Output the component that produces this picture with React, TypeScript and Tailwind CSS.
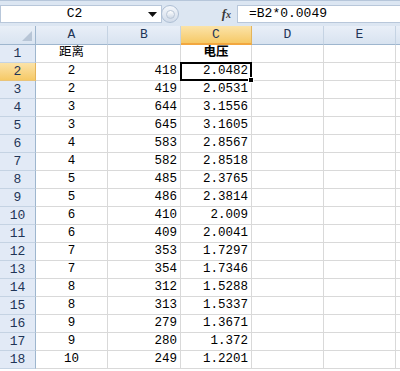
import React from "react";

type Row = { a: string; b: string; c: string; bold?: boolean };

const rows: Row[] = [
  { a: "距离", b: "", c: "电压", bold: true },
  { a: "2", b: "418", c: "2.0482" },
  { a: "2", b: "419", c: "2.0531" },
  { a: "3", b: "644", c: "3.1556" },
  { a: "3", b: "645", c: "3.1605" },
  { a: "4", b: "583", c: "2.8567" },
  { a: "4", b: "582", c: "2.8518" },
  { a: "5", b: "485", c: "2.3765" },
  { a: "5", b: "486", c: "2.3814" },
  { a: "6", b: "410", c: "2.009" },
  { a: "6", b: "409", c: "2.0041" },
  { a: "7", b: "353", c: "1.7297" },
  { a: "7", b: "354", c: "1.7346" },
  { a: "8", b: "312", c: "1.5288" },
  { a: "8", b: "313", c: "1.5337" },
  { a: "9", b: "279", c: "1.3671" },
  { a: "9", b: "280", c: "1.372" },
  { a: "10", b: "249", c: "1.2201" },
];

const font = { fontFamily: '"Liberation Mono", "Noto Sans CJK SC", monospace' };

function FormulaBar() {
  return (
    <div className="flex h-[26px] items-start border-t border-[#b6c6da] bg-[#dce6f2] pt-[4px]">
      <div className="flex h-[18px] w-[162px] items-center border border-[#b8c7da] bg-white">
        <span className="flex-1 text-center text-[13px] text-black" style={font}>
          C2
        </span>
        <svg width="9" height="5" viewBox="0 0 9 5" className="mr-[4px]">
          <path d="M0 0h9L4.5 5z" fill="#111" />
        </svg>
      </div>
      <div className="-ml-[1px] flex h-[18px] w-[18px] items-center justify-center rounded-full border border-[#aebfd4] bg-gradient-to-b from-[#f4f7fb] to-[#d2dcea]">
        <div className="h-[9px] w-[9px] rounded-full border border-[#b9c6d6] bg-gradient-to-b from-[#ffffff] to-[#cfd9e6]" />
      </div>
      <div className="flex h-[18px] w-[58px] items-center justify-end pr-[6px]">
        <span
          className="text-[13px] font-bold italic text-[#3a3a3a]"
          style={{ fontFamily: '"Liberation Serif", serif' }}
        >
          f<span className="text-[10px]">x</span>
        </span>
      </div>
      <div className="flex h-[18px] flex-1 items-center border border-r-0 border-[#b8c7da] bg-white pl-[11px]">
        <span className="text-[13px] text-black" style={font}>
          =B2*0.0049
        </span>
      </div>
    </div>
  );
}

function HeaderRow() {
  const cols = [
    { l: "A", w: "w-[72px]" },
    { l: "B", w: "w-[73px]" },
    { l: "C", w: "w-[71px]", sel: true },
    { l: "D", w: "w-[72px]" },
    { l: "E", w: "w-[72px]" },
  ];
  return (
    <div className="flex h-[19px]">
      <div className="relative w-[36px] border-r border-b border-[#9eb6ce] bg-gradient-to-b from-[#e9eff7] to-[#d9e4f1]">
        <svg width="10" height="10" viewBox="0 0 10 10" className="absolute right-[3px] bottom-[3px]">
          <path d="M10 0V10H0z" fill="#b7c5d6" />
        </svg>
      </div>
      {cols.map((c) =>
        c.sel ? (
          <div
            key={c.l}
            className={`${c.w} flex items-center justify-center border-r border-b-2 border-r-[#e4b45a] border-b-[#f2a73f] bg-gradient-to-b from-[#fbe3a8] to-[#f6c965] text-[13px] text-[#1f3557]`}
            style={font}
          >
            {c.l}
          </div>
        ) : (
          <div
            key={c.l}
            className={`${c.w} flex items-center justify-center border-r border-b border-r-[#c5d3e3] border-b-[#9eb6ce] bg-gradient-to-b from-[#e9eff8] to-[#d8e3f0] text-[13px] text-[#1f3557]`}
            style={font}
          >
            {c.l}
          </div>
        ),
      )}
      <div className="flex-1 border-b border-[#9eb6ce] bg-gradient-to-b from-[#e9eff8] to-[#d8e3f0]" />
    </div>
  );
}

function DataRow({ r, i }: { r: Row; i: number }) {
  const n = i + 1;
  const sel = n === 2;
  const cell = "h-[18px] border-r border-b border-[#d9d9d9] flex items-end pb-[2px] text-[12.5px] text-black leading-[14px]";
  return (
    <div className="flex h-[18px]">
      {sel ? (
        <div
          className="flex h-[18px] w-[36px] items-end justify-center border-r border-b border-r-[#e4b45a] border-b-[#e9c47a] bg-gradient-to-b from-[#fbe3a8] to-[#f6c965] pb-[1px] text-[13px] leading-[14px] text-[#1f3557]"
          style={font}
        >
          {n}
        </div>
      ) : (
        <div
          className="flex h-[18px] w-[36px] items-end justify-center border-r border-b border-r-[#9eb6ce] border-b-[#c5d3e3] bg-[#e2eaf6] pb-[1px] text-[13px] leading-[14px] text-[#1f3557]"
          style={font}
        >
          {n}
        </div>
      )}
      <div className={`${cell} w-[72px] justify-center`} style={font}>
        {r.a}
      </div>
      <div className={`${cell} w-[73px] justify-end pr-[3px]`} style={font}>
        {r.b}
      </div>
      {sel ? (
        <div className="relative -mt-[1px] -ml-[1px] flex h-[19px] w-[72px] items-end justify-end border-2 border-black pr-[2px] pb-[1px] text-[12.5px] leading-[14px] text-black" style={font}>
          {r.c}
          <div className="absolute -right-[4px] -bottom-[4px] h-[6px] w-[6px] border border-white bg-black" />
        </div>
      ) : r.bold ? (
        <div className={`${cell} w-[71px] justify-center font-bold`} style={font}>
          {r.c}
        </div>
      ) : (
        <div className={`${cell} w-[71px] justify-end pr-[3px]`} style={font}>
          {r.c}
        </div>
      )}
      <div className={`${cell} w-[72px]`} />
      <div className={`${cell} w-[72px]`} />
      <div className="h-[18px] flex-1 border-b border-[#d9d9d9]" />
    </div>
  );
}

export default function App() {
  return (
    <div className="h-[371px] w-[400px] overflow-hidden bg-white">
      <FormulaBar />
      <HeaderRow />
      {rows.map((r, i) => (
        <DataRow key={i} r={r} i={i} />
      ))}
    </div>
  );
}
